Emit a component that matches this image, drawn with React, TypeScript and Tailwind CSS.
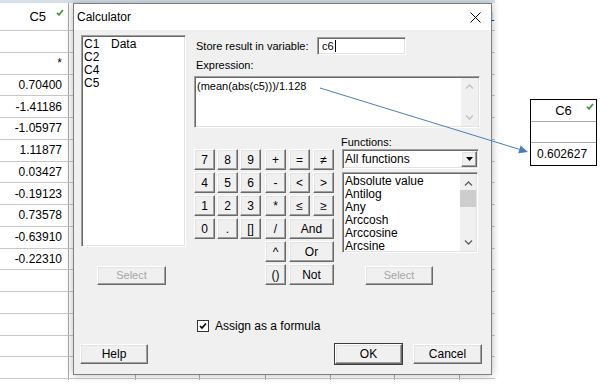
import React from "react";

const btn =
  "flex items-center justify-center bg-[#f0f0f0] border border-t-white border-l-white border-r-[#696969] border-b-[#696969] shadow-[inset_-1px_-1px_0_#a0a0a0,inset_1px_1px_0_#e3e3e3]";
const sunken =
  "bg-white border border-t-[#a0a0a0] border-l-[#a0a0a0] border-r-white border-b-white shadow-[inset_1px_1px_0_#696969,inset_-1px_-1px_0_#e3e3e3]";

const colWidths = [69, 67, 64, 66, 65, 64, 65, 65];
const values = ["", "*", "0.70400", "-1.41186", "-1.05977", "1.11877", "0.03427", "-0.19123", "0.73578", "-0.63910", "-0.22310", "", "", "", "", "", ""];

function Check({ className }: { className?: string }) {
  return (
    <svg width="8" height="7" viewBox="0 0 8 7" className={className}>
      <path d="M1 3.8 L3 5.8 L7 1" fill="none" stroke="#3c9a3c" strokeWidth="1.8" />
    </svg>
  );
}

function Chevron({ up, color }: { up?: boolean; color: string }) {
  return (
    <svg width="9" height="5" viewBox="0 0 9 5">
      <path d={up ? "M1 4.5 L4.5 1 L8 4.5" : "M1 0.5 L4.5 4 L8 0.5"} fill="none" stroke={color} strokeWidth="1.3" />
    </svg>
  );
}

function Worksheet() {
  return (
    <div className="absolute left-0 top-0 w-[495px] h-[380px] overflow-hidden bg-white font-['Liberation_Sans',Arial,sans-serif] text-[12px] text-black">
      <div className="h-[3px] bg-[#d7e0ea]" />
      <div className="flex h-[28px] border-b border-[#c6c6c6]">
        {colWidths.map((w, i) => (
          <div key={i} style={{ width: w }} className="relative shrink-0 flex items-center justify-end border-r border-[#a8a8a8]">
            {i === 0 && (
              <>
                <span className="pr-[22px] text-[13px]">C5</span>
                <Check className="absolute right-[4px] top-[6px]" />
              </>
            )}
            {i === 7 && <span className="pr-[22px] text-[13px] text-[#1f3f8f]">C12</span>}
          </div>
        ))}
      </div>
      {values.map((v, r) => (
        <div key={r} className="flex h-[21.75px] border-b border-[#c6c6c6]">
          {colWidths.map((w, i) => (
            <div key={i} style={{ width: w }} className="shrink-0 flex items-center justify-end pr-[6px] border-r border-[#a8a8a8]">
              {i === 0 ? v : ""}
            </div>
          ))}
        </div>
      ))}
    </div>
  );
}

function KeyBtn({ label, wide }: { label: string; wide?: boolean }) {
  return <div className={`${btn} h-[21px] text-[12px] text-black ${wide ? "col-span-2" : ""}`}>{label}</div>;
}

function Dialog() {
  const nums = ["7", "8", "9", "4", "5", "6", "1", "2", "3", "0", ".", "[]"];
  const funcs = ["Absolute value", "Antilog", "Any", "Arccosh", "Arccosine", "Arcsine"];
  return (
    <div className="absolute left-[73px] top-[3px] w-[419px] h-[372px] border border-[#7f7f7f] bg-[#f0f0f0] shadow-[0_0_8px_rgba(0,0,0,0.28)] font-['Liberation_Sans',Arial,sans-serif] text-[11px] text-black flex flex-col">
      <div className="h-[26px] bg-white flex items-center justify-between pl-[3px] pr-[10px]">
        <span className="text-[12px]">Calculator</span>
        <svg width="11" height="11" viewBox="0 0 11 11">
          <path d="M0.5 0.5 L10.5 10.5 M10.5 0.5 L0.5 10.5" stroke="#000" strokeWidth="1" />
        </svg>
      </div>
      <div className="flex flex-col flex-1">
        <div className="flex pt-[5px]">
          <div className="ml-[7px] w-[105px] flex flex-col">
            <div className={`${sunken} h-[212px] pt-[2px] pl-[2px] leading-[13px] text-[12px]`}>
              <div className="flex"><span className="w-[27px]">C1</span><span>Data</span></div>
              <div>C2</div>
              <div>C4</div>
              <div>C5</div>
            </div>
            <div className={`${btn} mt-[19px] ml-[16px] w-[69px] h-[19px] text-[#a6a6a6]`}>Select</div>
          </div>
          <div className="ml-[8px] flex flex-col">
            <div className="mt-[2px] flex items-center h-[18px]">
              <span className="pl-[2px] w-[123px]">Store result in variable:</span>
              <div className={`${sunken} w-[89px] h-[18px] flex items-center pl-[4px]`}>
                <span>c6</span>
                <span className="ml-[1px] w-px h-[12px] bg-black" />
              </div>
            </div>
            <div className="mt-[3px] h-[14px] leading-[14px] pl-[2px]">Expression:</div>
            <div className={`${sunken} mt-[4px] w-[286px] h-[52px] flex`}>
              <div className="flex-1 pt-[3px] pl-[2px] leading-[13px]">(mean(abs(c5)))/1.128</div>
              <div className="w-[17px] mr-[1px] my-[1px] bg-[#f0f0f0] flex flex-col items-center justify-between py-[6px]">
                <Chevron up color="#c0c0c0" />
                <Chevron color="#c0c0c0" />
              </div>
            </div>
            <div className="mt-[8px] flex">
              <div className="pt-[13px] flex">
                <div className="grid grid-cols-[21px_21px_21px] gap-x-[2px] gap-y-[2px] content-start">
                  {nums.map((n) => (
                    <KeyBtn key={n} label={n} />
                  ))}
                </div>
                <div className="ml-[4px] grid grid-cols-[21px_21px_21px] gap-x-[3px] gap-y-[2px] content-start">
                  <KeyBtn label="+" />
                  <KeyBtn label="=" />
                  <KeyBtn label="≠" />
                  <KeyBtn label="-" />
                  <KeyBtn label="<" />
                  <KeyBtn label=">" />
                  <KeyBtn label="*" />
                  <KeyBtn label="≤" />
                  <KeyBtn label="≥" />
                  <KeyBtn label="/" />
                  <KeyBtn label="And" wide />
                  <KeyBtn label="^" />
                  <KeyBtn label="Or" wide />
                  <KeyBtn label="()" />
                  <KeyBtn label="Not" wide />
                </div>
              </div>
              <div className="ml-[8px] flex flex-col">
                <div className="h-[13px] leading-[13px] -ml-[1px]">Functions:</div>
                <div className={`${sunken} w-[137px] h-[20px] flex items-center`}>
                  <span className="flex-1 pl-[2px] text-[12px]">All functions</span>
                  <div className={`${btn} w-[16px] h-[16px] mr-[1px]`}>
                    <svg width="7" height="4" viewBox="0 0 7 4">
                      <path d="M0 0 L7 0 L3.5 4 Z" fill="#000" />
                    </svg>
                  </div>
                </div>
                <div className={`${sunken} mt-[3px] w-[136px] h-[81px] flex`}>
                  <div className="flex-1 pt-[2px] pl-[2px] leading-[13px] text-[12px]">
                    {funcs.map((f) => (
                      <div key={f}>{f}</div>
                    ))}
                  </div>
                  <div className="w-[16px] mr-[1px] my-[1px] bg-[#f0f0f0] flex flex-col items-center pt-[7px]">
                    <Chevron up color="#606060" />
                    <div className="mt-[4px] w-[16px] h-[17px] bg-[#cdcdcd]" />
                    <div className="mt-auto mb-[6px]">
                      <Chevron color="#606060" />
                    </div>
                  </div>
                </div>
                <div className={`${btn} mt-[13px] ml-[23px] w-[68px] h-[19px] text-[#a6a6a6]`}>Select</div>
              </div>
            </div>
          </div>
        </div>
        <div className="mt-[34px] ml-[123px] flex items-center h-[13px]">
          <div className="w-[12px] h-[12px] bg-white border border-[#333] flex items-center justify-center">
            <svg width="8" height="8" viewBox="0 0 8 8">
              <path d="M1 4 L3 6 L7 1.5" fill="none" stroke="#000" strokeWidth="1.6" />
            </svg>
          </div>
          <span className="ml-[6px] text-[12px]">Assign as a formula</span>
        </div>
        <div className="mt-[12px] flex text-[12px]">
          <div className={`${btn} ml-[6px] w-[68px] h-[20px] text-black`}>Help</div>
          <div className={`${btn} ml-[187px] w-[67px] h-[20px] text-black outline outline-1 outline-[#3c3c3c]`}>OK</div>
          <div className={`${btn} ml-[11px] w-[69px] h-[20px] text-black`}>Cancel</div>
        </div>
      </div>
    </div>
  );
}

function C6Cell() {
  return (
    <div className="absolute left-[530px] top-[99px] w-[67px] border border-black bg-white font-['Liberation_Sans',Arial,sans-serif] text-black">
      <div className="relative h-[22px] border-b border-[#a8a8a8] flex items-center justify-center text-[13px]">
        C6
        <Check className="absolute right-[2px] top-[3px]" />
      </div>
      <div className="h-[21px] border-b border-[#a8a8a8]" />
      <div className="h-[22px] flex items-center pl-[6px] text-[12px]">0.602627</div>
    </div>
  );
}

export default function App() {
  return (
    <div className="relative w-[604px] h-[386px] bg-white overflow-hidden">
      <Worksheet />
      <Dialog />
      <C6Cell />
      <svg className="absolute left-0 top-0 pointer-events-none" width="604" height="386">
        <line x1="320" y1="88" x2="519.4" y2="149.35" stroke="#4a7ebb" strokeWidth="1" />
        <polygon points="528,152 518.2,153.2 520.6,145.5" fill="#4a7ebb" />
      </svg>
    </div>
  );
}
